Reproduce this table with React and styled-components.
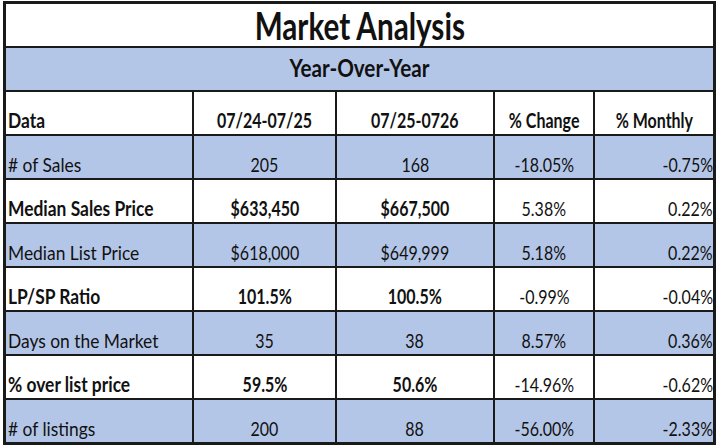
import React from "react";
import styled, { createGlobalStyle } from "styled-components";

const GlobalStyle = createGlobalStyle`
  html, body {
    margin: 0;
    padding: 0;
    background: #fff;
  }
  body {
    padding: 1px 0 0 3px;
    font-family: "Lato", "Open Sans", sans-serif;
    color: #111;
  }
`;

const COLS = "188px 143px 158px 100px 118px";
const BLUE = "#b4c6e7";
const LINE = "#1a1a1a";

const Sheet = styled.div`
  display: flex;
  flex-direction: column;
  width: 707px;
  border: 3px solid ${LINE};
  background: #fff;
`;

const Banner = styled.div`
  height: 44px;
  box-sizing: border-box;
  border-bottom: 2px solid ${LINE};
  background: ${(p) => p.$fill || "#fff"};
  display: flex;
  align-items: flex-end;
  justify-content: center;
  padding-bottom: ${(p) => p.$pb}px;
  font-weight: 700;
  font-size: ${(p) => p.$size}px;
  line-height: 1;
`;

const Row = styled.div`
  display: grid;
  grid-template-columns: ${COLS};
  height: 44px;
  box-sizing: border-box;
  border-bottom: 2px solid ${LINE};
  background: ${(p) => (p.$fill ? BLUE : "#fff")};

  &:last-child {
    border-bottom: none;
    height: 42px;
  }
`;

const Cell = styled.div`
  display: flex;
  align-items: flex-end;
  justify-content: ${(p) =>
    p.$align === "left" ? "flex-start" : p.$align === "right" ? "flex-end" : "center"};
  padding: 0 ${(p) => (p.$align === "right" ? 0 : 2)}px 4px;
  border-right: 2px solid ${LINE};
  font-size: 20px;
  line-height: 20px;
  font-weight: ${(p) => (p.$bold ? 700 : 400)};
  overflow: hidden;

  &:last-child {
    border-right: none;
  }
`;

const Txt = styled.span`
  display: inline-block;
  white-space: nowrap;
  transform: scaleX(${(p) => p.$sx || 0.87});
  transform-origin: ${(p) =>
    p.$align === "left" ? "left" : p.$align === "right" ? "right" : "center"} bottom;
`;

const header = ["Data", "07/24-07/25", "07/25-0726", "% Change", "% Monthly"];

const rows = [
  { label: "# of Sales", vals: ["205", "168", "-18.05%", "-0.75%"] },
  { label: "Median Sales Price", vals: ["$633,450", "$667,500", "5.38%", "0.22%"], bold: true },
  { label: "Median List Price", vals: ["$618,000", "$649,999", "5.18%", "0.22%"] },
  { label: "LP/SP Ratio", vals: ["101.5%", "100.5%", "-0.99%", "-0.04%"], bold: true },
  { label: "Days on the Market", vals: ["35", "38", "8.57%", "0.36%"] },
  { label: "% over list price", vals: ["59.5%", "50.6%", "-14.96%", "-0.62%"], bold: true },
  { label: "# of listings", vals: ["200", "88", "-56.00%", "-2.33%"] },
];

const alignFor = (i) => (i === 0 ? "left" : i === 4 ? "right" : "center");

export default function App() {
  return (
    <>
      <GlobalStyle />
      <Sheet>
        <Banner $size={38} $pb={2}>
          <Txt $sx={0.78}>Market Analysis</Txt>
        </Banner>
        <Banner $size={24} $pb={10} $fill={BLUE}>
          <Txt $sx={0.86}>Year-Over-Year</Txt>
        </Banner>
        <Row>
          {header.map((h, i) => {
            const align = i === 0 ? "left" : "center";
            return (
              <Cell key={h} $align={align} $bold>
                <Txt $align={align} $sx={i === 0 ? 0.87 : 0.8}>
                  {h}
                </Txt>
              </Cell>
            );
          })}
        </Row>
        {rows.map((r, ri) => (
          <Row key={r.label} $fill={ri % 2 === 0}>
            {[r.label, ...r.vals].map((v, i) => {
              const align = alignFor(i);
              return (
                <Cell key={i} $align={align} $bold={r.bold && i < 3}>
                  <Txt $align={align} $sx={i === 0 ? 0.87 : 0.8}>
                    {v}
                  </Txt>
                </Cell>
              );
            })}
          </Row>
        ))}
      </Sheet>
    </>
  );
}
